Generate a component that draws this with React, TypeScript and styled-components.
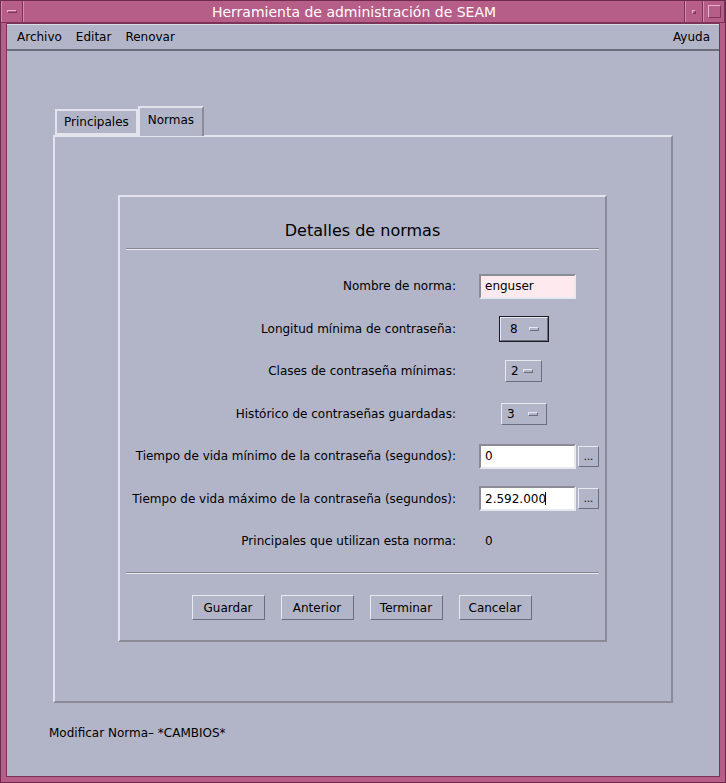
import React from "react";
import styled, { createGlobalStyle } from "styled-components";

const GlobalStyle = createGlobalStyle`
  html, body {
    margin: 0;
    padding: 0;
    background: #b2b4c8;
  }
  * {
    box-sizing: border-box;
  }
`;

const Window = styled.div`
  width: 726px;
  height: 783px;
  display: flex;
  flex-direction: column;
  background: #b65d88;
  border: 1px solid #6e2a4c;
  padding: 0 5px 5px 5px;
  font-family: "DejaVu Sans", "Liberation Sans", sans-serif;
  font-size: 12px;
  color: #000;
`;

const TitleBar = styled.div`
  height: 22px;
  display: flex;
  align-items: stretch;
  margin: 0 -5px;
  border-bottom: 1px solid #7c3358;
`;

const FrameButton = styled.div<{ $w: number }>`
  width: ${(p) => p.$w}px;
  display: flex;
  align-items: center;
  justify-content: center;
  border-left: 1px solid #d68cae;
  border-right: 1px solid #7c3358;
`;

const Dash = styled.div`
  width: 10px;
  height: 3px;
  border: 1px solid #e9b2ca;
  border-right-color: #7c3358;
  border-bottom-color: #7c3358;
`;

const Dot = styled.div`
  width: 4px;
  height: 4px;
  border: 1px solid #e9b2ca;
  border-right-color: #7c3358;
  border-bottom-color: #7c3358;
`;

const Square = styled.div`
  width: 13px;
  height: 13px;
  border: 1px solid #e9b2ca;
  border-right-color: #7c3358;
  border-bottom-color: #7c3358;
`;

const Title = styled.div`
  flex: 1;
  display: flex;
  align-items: center;
  justify-content: center;
  color: #fff;
  font-size: 14px;
  border-left: 1px solid #d68cae;
  border-right: 1px solid #7c3358;
`;

const Client = styled.div`
  flex: 1;
  display: flex;
  flex-direction: column;
  background: #b2b4c8;
  border: 1px solid #7c3358;
`;

const MenuBar = styled.div`
  height: 27px;
  display: flex;
  align-items: center;
  padding: 0 9px 0 10px;
  border-top: 1px solid #dcdde8;
  border-bottom: 2px solid #6c6d7c;
`;

const MenuItem = styled.span<{ $right?: boolean }>`
  margin-right: 14px;
  ${(p) => (p.$right ? "margin-left: auto; margin-right: 0;" : "")}
`;

const Body = styled.div`
  flex: 1;
  display: flex;
  flex-direction: column;
  padding-top: 55px;
`;

const TabStrip = styled.div`
  display: flex;
  align-items: flex-end;
  height: 29px;
  margin-left: 48px;
  position: relative;
  z-index: 1;
`;

const Tab = styled.div<{ $active?: boolean }>`
  height: ${(p) => (p.$active ? 30 : 26)}px;
  padding: 0 ${(p) => (p.$active ? 8 : 7)}px;
  display: flex;
  align-items: center;
  background: #b2b4c8;
  border-top: 2px solid #e2e3ec;
  border-left: 2px solid #e2e3ec;
  border-right: 2px solid ${(p) => (p.$active ? "#8a8b96" : "#e2e3ec")};
  border-bottom: ${(p) => (p.$active ? "none" : "2px solid #e2e3ec")};
  margin-bottom: ${(p) => (p.$active ? -1 : 0)}px;
  padding-bottom: ${(p) => (p.$active ? 4 : 0)}px;
`;

const TabPanel = styled.div`
  width: 620px;
  height: 568px;
  margin-left: 46px;
  border-top: 2px solid #e2e3ec;
  border-left: 2px solid #e2e3ec;
  border-right: 2px solid #8a8b96;
  border-bottom: 2px solid #8a8b96;
  padding: 58px 0 0 63px;
`;

const DetailBox = styled.div`
  width: 489px;
  height: 447px;
  border-top: 2px solid #e2e3ec;
  border-left: 2px solid #e2e3ec;
  border-right: 2px solid #8a8b96;
  border-bottom: 2px solid #8a8b96;
  display: flex;
  flex-direction: column;
`;

const Heading = styled.div`
  height: 51px;
  display: flex;
  align-items: center;
  justify-content: center;
  padding-top: 16px;
  font-size: 16px;
`;

const Separator = styled.div`
  margin: 0 6px;
  height: 2px;
  border-top: 1px solid #858692;
  border-bottom: 1px solid #e8e8f0;
`;

const Form = styled.div`
  display: grid;
  grid-template-columns: 336px 1fr;
  grid-auto-rows: 42.5px;
  column-gap: 23px;
  align-items: center;
  padding: 15px 0 9.5px;
`;

const Label = styled.div`
  justify-self: end;
  white-space: nowrap;
`;

const Control = styled.div`
  display: flex;
  align-items: center;
  gap: 2px;
`;

const Field = styled.div<{ $bg: string }>`
  width: 97px;
  height: 25px;
  background: ${(p) => p.$bg};
  border: 2px solid #8a8b96;
  border-right-color: #e8e8f0;
  border-bottom-color: #e8e8f0;
  display: flex;
  align-items: center;
  padding-left: 4px;
`;

const Caret = styled.span`
  display: inline-block;
  width: 1px;
  height: 13px;
  background: #000;
  margin-left: -1px;
`;

const DotsButton = styled.div`
  width: 21px;
  height: 21px;
  border: 1px solid #e8e8f0;
  border-right-color: #6c6d7c;
  border-bottom-color: #6c6d7c;
  display: flex;
  align-items: center;
  justify-content: center;
  font-size: 10px;
`;

const OptionMenu = styled.div<{ $w: number; $offset: number; $focus?: boolean }>`
  width: ${(p) => p.$w}px;
  height: ${(p) => (p.$focus ? 24 : 22)}px;
  margin-left: ${(p) => p.$offset}px;
  border: 1px solid #e8e8f0;
  border-right-color: #6c6d7c;
  border-bottom-color: #6c6d7c;
  ${(p) => (p.$focus ? "outline: 1px solid #1c1c28;" : "")}
  display: flex;
  align-items: center;
  justify-content: space-between;
  padding: 0 8px 0 ${(p) => (p.$focus ? 9 : 5)}px;
`;

const OptionBar = styled.span`
  width: 10px;
  height: 4px;
  border: 1px solid #e8e8f0;
  border-right-color: #6c6d7c;
  border-bottom-color: #6c6d7c;
`;

const Value = styled.div`
  padding-left: 6px;
`;

const ButtonRow = styled.div`
  display: flex;
  justify-content: center;
  gap: 16px;
  padding-top: 21px;
  padding-right: 2px;
`;

const Button = styled.div`
  width: 73px;
  height: 25px;
  border: 1px solid #e8e8f0;
  border-right-color: #6c6d7c;
  border-bottom-color: #6c6d7c;
  display: flex;
  align-items: center;
  justify-content: center;
`;

const Status = styled.div`
  padding: 23px 0 0 42px;
`;

const App = () => {
  return (
    <>
      <GlobalStyle />
      <Window>
        <TitleBar>
          <FrameButton $w={22}>
            <Dash />
          </FrameButton>
          <Title>Herramienta de administración de SEAM</Title>
          <FrameButton $w={18}>
            <Dot />
          </FrameButton>
          <FrameButton $w={22}>
            <Square />
          </FrameButton>
        </TitleBar>
        <Client>
          <MenuBar>
            <MenuItem>Archivo</MenuItem>
            <MenuItem>Editar</MenuItem>
            <MenuItem>Renovar</MenuItem>
            <MenuItem $right>Ayuda</MenuItem>
          </MenuBar>
          <Body>
            <TabStrip>
              <Tab>Principales</Tab>
              <Tab $active>Normas</Tab>
            </TabStrip>
            <TabPanel>
              <DetailBox>
                <Heading>Detalles de normas</Heading>
                <Separator />
                <Form>
                  <Label>Nombre de norma:</Label>
                  <Control>
                    <Field $bg="#fde9ee">enguser</Field>
                  </Control>

                  <Label>Longitud mínima de contraseña:</Label>
                  <Control>
                    <OptionMenu $w={48} $offset={21} $focus>
                      8 <OptionBar />
                    </OptionMenu>
                  </Control>

                  <Label>Clases de contraseña mínimas:</Label>
                  <Control>
                    <OptionMenu $w={37} $offset={26}>
                      2 <OptionBar />
                    </OptionMenu>
                  </Control>

                  <Label>Histórico de contraseñas guardadas:</Label>
                  <Control>
                    <OptionMenu $w={46} $offset={22}>
                      3 <OptionBar />
                    </OptionMenu>
                  </Control>

                  <Label>Tiempo de vida mínimo de la contraseña (segundos):</Label>
                  <Control>
                    <Field $bg="#ffffff">0</Field>
                    <DotsButton>...</DotsButton>
                  </Control>

                  <Label>Tiempo de vida máximo de la contraseña (segundos):</Label>
                  <Control>
                    <Field $bg="#ffffff">
                      2.592.000<Caret />
                    </Field>
                    <DotsButton>...</DotsButton>
                  </Control>

                  <Label>Principales que utilizan esta norma:</Label>
                  <Value>0</Value>
                </Form>
                <Separator />
                <ButtonRow>
                  <Button>Guardar</Button>
                  <Button>Anterior</Button>
                  <Button>Terminar</Button>
                  <Button>Cancelar</Button>
                </ButtonRow>
              </DetailBox>
            </TabPanel>
            <Status>Modificar Norma– *CAMBIOS*</Status>
          </Body>
        </Client>
      </Window>
    </>
  );
};

export default App;
